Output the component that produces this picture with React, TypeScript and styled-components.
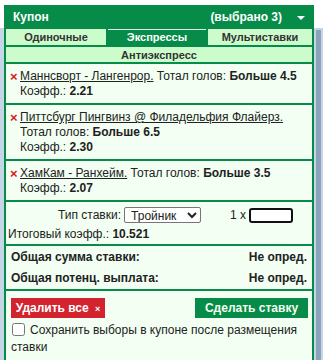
import React from "react";
import styled, {createGlobalStyle} from "styled-components";

const GlobalStyle = createGlobalStyle`
  html, body {
    margin: 0;
    padding: 0;
    background: #ffffff;
    font-family: "Liberation Sans", Arial, sans-serif;
    font-size: 12px;
    color: #222;
  }
`;

type Selection = {
    id: number;
    event: string;
    market: string;
    pick: string;
    odds: string;
    wrap?: boolean;
};

const selections: Selection[] = [
    {id: 1, event: "Маннсворт - Лангенрор.", market: "Тотал голов:", pick: "Больше 4.5", odds: "2.21"},
    {id: 2, event: "Питтсбург Пингвинз @ Филадельфия Флайерз.", market: "Тотал голов:", pick: "Больше 6.5", odds: "2.30", wrap: true},
    {id: 3, event: "ХамКам - Ранхейм.", market: "Тотал голов:", pick: "Больше 3.5", odds: "2.07"},
];

export default function App() {
    return (
        <>
            <GlobalStyle/>
            <Page>
                <Header>
                    <HeaderTitle>Купон</HeaderTitle>
                    <HeaderCount>(выбрано 3)</HeaderCount>
                    <Caret/>
                </Header>
                <Viewport>
                    <Panel>
                        <Tabs>
                            <Tab>Одиночные</Tab>
                            <Tab active>Экспрессы</Tab>
                            <Tab>Мультиставки</Tab>
                            <Tab wide>Антиэкспресс</Tab>
                        </Tabs>
                        {selections.map(s => (
                            <SelectionBox key={s.id}>
                                <Remove>×</Remove>
                                <SelectionText>
                                    <EventLink>{s.event}</EventLink>
                                    {s.wrap ? <br/> : " "}
                                    {s.market} <b>{s.pick}</b>
                                    <br/>
                                    Коэфф.: <b>{s.odds}</b>
                                </SelectionText>
                            </SelectionBox>
                        ))}
                        <BetTypeBox>
                            <BetTypeRow>
                                <span>Тип ставки:</span>
                                <TypeSelect defaultValue="treble">
                                    <option value="treble">Тройник</option>
                                </TypeSelect>
                                <StakeLabel>1 x</StakeLabel>
                                <StakeInput type="text"/>
                            </BetTypeRow>
                            <TotalOdds>Итоговый коэфф.: <b>10.521</b></TotalOdds>
                        </BetTypeBox>
                        <TotalsBox>
                            <TotalRow><span>Общая сумма ставки:</span><span>Не опред.</span></TotalRow>
                            <TotalRow><span>Общая потенц. выплата:</span><span>Не опред.</span></TotalRow>
                        </TotalsBox>
                        <ActionsBox>
                            <ButtonRow>
                                <DeleteButton>Удалить все <small>×</small></DeleteButton>
                                <PlaceButton>Сделать ставку</PlaceButton>
                            </ButtonRow>
                            <KeepLabel>
                                <Check type="checkbox"/>
                                Сохранить выборы в купоне после размещения ставки
                            </KeepLabel>
                        </ActionsBox>
                    </Panel>
                    <Scrollbar>
                        <Thumb/>
                    </Scrollbar>
                </Viewport>
            </Page>
        </>
    );
}

const Page = styled.div`
  width: 323px;
  height: 360px;
  overflow: hidden;
  padding-top: 5px;
  box-sizing: border-box;
`

const Header = styled.div`
  display: flex;
  align-items: center;
  margin-left: 4px;
  width: 310px;
  height: 23px;
  background: #078b48;
  color: #fff;
  font-weight: bold;
  font-size: 12px;
  padding: 0 9px;
  box-sizing: border-box;
`

const HeaderTitle = styled.span`
  flex: 1;
`

const HeaderCount = styled.span`
  margin-right: 15px;
`

const Caret = styled.span`
  width: 0;
  height: 0;
  margin-top: 3px;
  border-left: 4px solid transparent;
  border-right: 4px solid transparent;
  border-top: 4px solid #fff;
`

const Viewport = styled.div`
  display: flex;
  background: #c6d6e6;
  height: 340px;
`

const Panel = styled.div`
  margin-left: 4px;
  width: 310px;
  background: #078b48;
  padding: 0 2px;
  box-sizing: border-box;
`

const Tabs = styled.div`
  display: grid;
  grid-template-columns: 100px 98px 1fr;
  gap: 2px;
  padding-top: 1px;
  padding-bottom: 2px;
`

const Tab = styled.div<{ active?: boolean; wide?: boolean }>`
  grid-column: ${p => (p.wide ? "1 / -1" : "auto")};
  height: ${p => (p.wide ? "14px" : "15px")};
  line-height: ${p => (p.wide ? "14px" : "15px")};
  text-align: center;
  font-size: 11px;
  font-weight: bold;
  background: ${p => (p.active ? "#078b48" : "#ccfccc")};
  color: ${p => (p.active ? "#fff" : "#333")};
  border-top: 1px solid ${p => (p.active ? "#e8f5ec" : "#ccfccc")};
`

const SelectionBox = styled.div`
  display: flex;
  background: #f2fff2;
  padding: 5px 4px 4px 4px;
  margin-bottom: 2px;
  line-height: 15px;
`

const Remove = styled.span`
  color: #d42020;
  font-weight: bold;
  width: 10px;
  font-size: 13px;
`

const SelectionText = styled.div`
  flex: 1;
`

const EventLink = styled.a`
  color: #222;
  text-decoration: underline;
  cursor: pointer;
`

const BetTypeBox = styled.div`
  background: #f2fff2;
  padding: 5px 2px 2px 2px;
  margin-bottom: 2px;
`

const BetTypeRow = styled.div`
  display: flex;
  align-items: center;
  padding-left: 50px;
  height: 16px;
  gap: 3px;
`

const TypeSelect = styled.select`
  width: 77px;
  height: 16px;
  font-family: "Liberation Sans", Arial, sans-serif;
  font-size: 12px;
  padding: 0 2px;
  border: 1px solid #767676;
  border-radius: 2px;
  background: #fff;
  color: #222;
`

const StakeLabel = styled.span`
  margin-left: 26px;
`

const StakeInput = styled.input`
  width: 44px;
  height: 15px;
  box-sizing: border-box;
  border: 2px solid #111;
  border-radius: 3px;
  padding: 0;
`

const TotalOdds = styled.div`
  margin-top: 4px;
  line-height: 15px;
`

const TotalsBox = styled.div`
  background: #f2fff2;
  padding: 1px 5px 0 5px;
  margin-bottom: 2px;
`

const TotalRow = styled.div`
  display: flex;
  justify-content: space-between;
  font-weight: bold;
  line-height: 21px;
`

const ActionsBox = styled.div`
  background: #f2fff2;
  padding: 7px 4px 20px 5px;
`

const ButtonRow = styled.div`
  display: flex;
  justify-content: space-between;
`

const DeleteButton = styled.button`
  width: 94px;
  height: 20px;
  border: none;
  background: #d2232f;
  color: #fff;
  font-family: "Liberation Sans", Arial, sans-serif;
  font-weight: bold;
  font-size: 12px;
  padding: 0;

  small {
    font-size: 9px;
    margin-left: 3px;
  }
`

const PlaceButton = styled.button`
  width: 113px;
  height: 20px;
  border: none;
  background: #078b48;
  color: #f4fff0;
  font-family: "Liberation Sans", Arial, sans-serif;
  font-weight: bold;
  font-size: 12px;
  padding: 0;
`

const KeepLabel = styled.label`
  display: block;
  margin-top: 4px;
  line-height: 17px;
  color: #222;
`

const Check = styled.input`
  width: 13px;
  height: 13px;
  margin: 0 5px 0 1px;
  vertical-align: -2px;
`

const Scrollbar = styled.div`
  flex: 1;
  display: flex;
  justify-content: center;
  padding-top: 2px;
`

const Thumb = styled.div`
  width: 5px;
  height: 330px;
  background: #8aa3bb;
  border-radius: 1px;
`
